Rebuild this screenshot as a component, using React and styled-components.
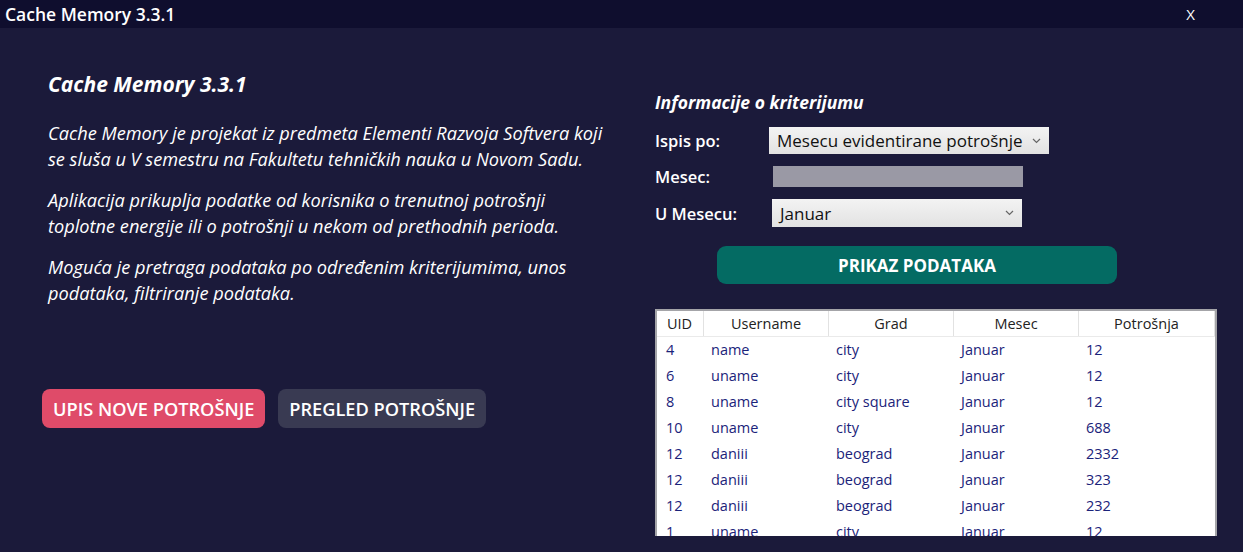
import React from "react"
import styled, { createGlobalStyle } from "styled-components"

const GlobalStyle = createGlobalStyle`
  html, body {
    margin: 0;
    padding: 0;
    background: #1b1a3a;
    font-family: "Open Sans", "Noto Sans", sans-serif;
    color: #fff;
  }
`

const rows = [
  { uid: 4, user: "name", grad: "city", mesec: "Januar", potrosnja: 12 },
  { uid: 6, user: "uname", grad: "city", mesec: "Januar", potrosnja: 12 },
  { uid: 8, user: "uname", grad: "city square", mesec: "Januar", potrosnja: 12 },
  { uid: 10, user: "uname", grad: "city", mesec: "Januar", potrosnja: 688 },
  { uid: 12, user: "daniii", grad: "beograd", mesec: "Januar", potrosnja: 2332 },
  { uid: 12, user: "daniii", grad: "beograd", mesec: "Januar", potrosnja: 323 },
  { uid: 12, user: "daniii", grad: "beograd", mesec: "Januar", potrosnja: 232 },
  { uid: 1, user: "uname", grad: "city", mesec: "Januar", potrosnja: 12 },
]

const Chevron = () => (
  <svg width="9" height="6" viewBox="0 0 9 6">
    <path d="M1 1l3.5 3.5L8 1" fill="none" stroke="#666" strokeWidth="1.2" />
  </svg>
)

const App = () => {
  return (
    <Window>
      <GlobalStyle />
      <TitleBar>
        <span>Cache Memory 3.3.1</span>
        <Close>X</Close>
      </TitleBar>
      <Body>
        <Intro>
          <Heading>Cache Memory 3.3.1</Heading>
          <Para>
            Cache Memory je projekat iz predmeta Elementi Razvoja Softvera koji
            <br />
            se sluša u V semestru na Fakultetu tehničkih nauka u Novom Sadu.
          </Para>
          <Para>
            Aplikacija prikuplja podatke od korisnika o trenutnoj potrošnji
            <br />
            toplotne energije ili o potrošnji u nekom od prethodnih perioda.
          </Para>
          <Para>
            Moguća je pretraga podataka po određenim kriterijumima, unos
            <br />
            podataka, filtriranje podataka.
          </Para>
          <Actions>
            <ActionButton $bg="#df4b69">UPIS NOVE POTROŠNJE</ActionButton>
            <ActionButton $bg="#393a52">PREGLED POTROŠNJE</ActionButton>
          </Actions>
        </Intro>

        <Criteria>
          <SubHeading>Informacije o kriterijumu</SubHeading>
          <FormRow>
            <Label>Ispis po:</Label>
            <Select $width={280} $height={27}>
              <span>Mesecu evidentirane potrošnje</span>
              <Chevron />
            </Select>
          </FormRow>
          <FormRow>
            <Label>Mesec:</Label>
            <BlankInput />
          </FormRow>
          <FormRow>
            <Label>U Mesecu:</Label>
            <Select $width={250} $height={28} $offset={3}>
              <span>Januar</span>
              <Chevron />
            </Select>
          </FormRow>
          <ShowButton>PRIKAZ PODATAKA</ShowButton>

          <Table>
            <HeaderRow>
              <HeadCell $align="left">UID</HeadCell>
              <HeadCell>Username</HeadCell>
              <HeadCell>Grad</HeadCell>
              <HeadCell>Mesec</HeadCell>
              <HeadCell>Potrošnja</HeadCell>
            </HeaderRow>
            {rows.map((r, i) => (
              <DataRow key={i}>
                <Cell $first>{r.uid}</Cell>
                <Cell>{r.user}</Cell>
                <Cell>{r.grad}</Cell>
                <Cell>{r.mesec}</Cell>
                <Cell>{r.potrosnja}</Cell>
              </DataRow>
            ))}
          </Table>
        </Criteria>
      </Body>
    </Window>
  )
}

export default App

const Window = styled.div`
  width: 1243px;
  height: 552px;
  overflow: hidden;
  display: flex;
  flex-direction: column;
`

const TitleBar = styled.div`
  height: 28px;
  flex: none;
  background: #0f0e2e;
  display: flex;
  align-items: center;
  justify-content: space-between;
  padding: 0 48px 0 5px;
  font-size: 17.5px;
  font-weight: 600;
`

const Close = styled.span`
  font-size: 15px;
  font-weight: 400;
`

const Body = styled.div`
  flex: 1;
  min-height: 0;
  display: flex;
`

const Intro = styled.div`
  width: 607px;
  flex: none;
  padding: 42px 0 0 48px;
  box-sizing: border-box;
  display: flex;
  flex-direction: column;
`

const Heading = styled.h1`
  margin: 0 0 22px;
  font-size: 21px;
  line-height: 28px;
  font-weight: 700;
  font-style: italic;
`

const Para = styled.p`
  margin: 0 0 15px;
  font-size: 18.2px;
  line-height: 26px;
  font-style: italic;
  white-space: nowrap;
`

const Actions = styled.div`
  display: flex;
  gap: 13px;
  margin-top: 68px;
  margin-left: -6px;
`

const ActionButton = styled.button`
  height: 39px;
  padding: 0 11px;
  border: none;
  border-radius: 8px;
  background: ${(p) => p.$bg};
  color: #fff;
  font-family: inherit;
  font-size: 18.2px;
  font-weight: 600;
`

const Criteria = styled.div`
  flex: 1;
  padding: 62px 0 16px 48px;
  display: flex;
  flex-direction: column;
  min-height: 0;
`

const SubHeading = styled.h2`
  margin: 0 0 13px;
  font-size: 17.5px;
  line-height: 24px;
  font-weight: 700;
  font-style: italic;
`

const FormRow = styled.div`
  display: flex;
  align-items: center;
  margin-bottom: 11px;
`

const Label = styled.div`
  width: 114px;
  font-size: 16.5px;
  font-weight: 600;
`

const Select = styled.div`
  width: ${(p) => p.$width}px;
  height: ${(p) => p.$height}px;
  margin-left: ${(p) => p.$offset || 0}px;
  box-sizing: border-box;
  background: linear-gradient(#f3f3f3, #e2e2e2);
  color: #111;
  display: flex;
  align-items: center;
  justify-content: space-between;
  padding: 0 8px;
  font-size: 17px;
  font-weight: 500;
`

const BlankInput = styled.div`
  width: 250px;
  height: 21px;
  margin-left: 4px;
  background: #9a99a5;
`

const ShowButton = styled.button`
  align-self: flex-start;
  margin: 8px 0 25px 62px;
  width: 400px;
  height: 38px;
  border: none;
  border-radius: 9px;
  background: #046b63;
  color: #fff;
  font-family: inherit;
  font-size: 17px;
  font-weight: 700;
`

const Table = styled.div`
  width: 562px;
  flex: 1;
  min-height: 0;
  box-sizing: border-box;
  border: 2px solid #a4a4a8;
  border-bottom: none;
  background: #fff;
  overflow: hidden;
`

const grid = `
  display: grid;
  grid-template-columns: 47px 125px 125px 125px 1fr;
`

const HeaderRow = styled.div`
  ${grid}
  height: 25px;
  border-bottom: 1px solid #eaeaea;
`

const HeadCell = styled.div`
  font-size: 14.5px;
  color: #222;
  text-align: ${(p) => p.$align || "center"};
  padding-left: ${(p) => (p.$align ? "10px" : "0")};
  line-height: 25px;
  border-right: 1px solid #e2e2e2;
`

const DataRow = styled.div`
  ${grid}
  height: 26px;
`

const Cell = styled.div`
  font-size: 14.5px;
  line-height: 26px;
  color: #1b237a;
  padding-left: ${(p) => (p.$first ? "9px" : "7px")};
`
